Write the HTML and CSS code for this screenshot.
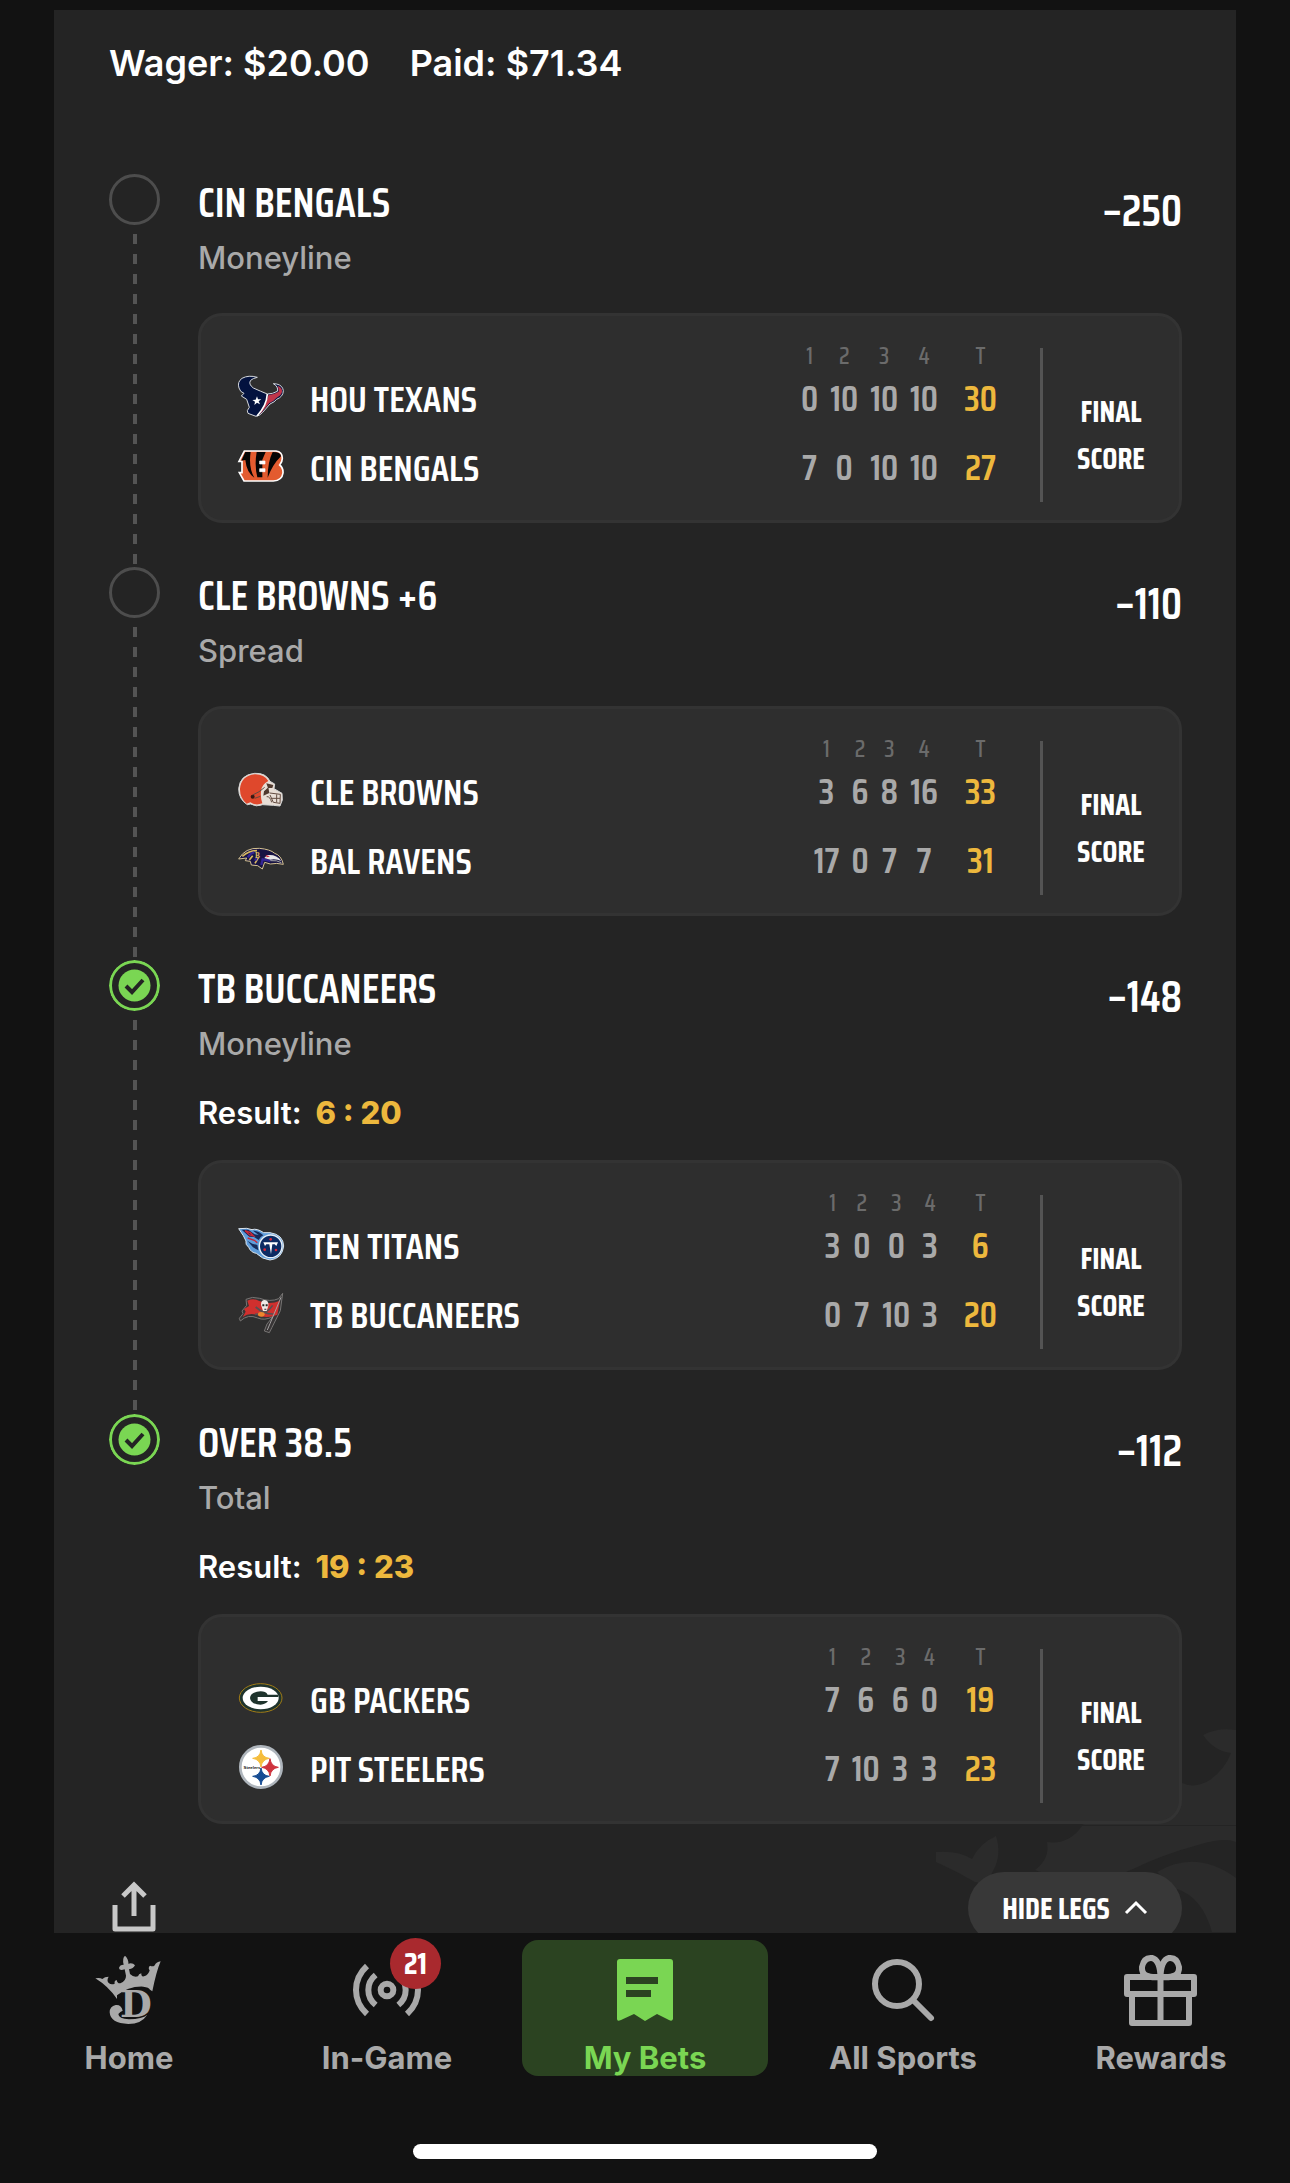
FILE: index.html
```
<!DOCTYPE html>
<html lang="en">
<head>
    <meta charset="UTF-8">
    <meta name="viewport" content="width=device-width, initial-scale=1.0">
    <title>My Bets</title>
    <link rel="stylesheet" href="styles.css">
</head>
<body>

<main class="bet-slip">
    <!-- crown watermark -->
    <svg class="watermark" viewBox="0 0 300 213" aria-hidden="true">
        <path d="M267 16Q282 8 300 11V106H146L246 64Q259 70 274 61Q289 50 295 34Q278 32 267 16Z"/>
        <path d="M146 107H300V123Q288 118 262 126Q228 135 197 150L150 170L99 151Q114 140 111 123Q133 126 146 107Z"/>
        <path d="M0 133Q22 131 36 140Q44 124 60 117Q66 136 57 152L50 165L39 163Q20 152 0 143Z"/>
        <path d="M221 153Q260 130 300 159V213H276Q266 178 241 170Z"/>
    </svg>

    <header class="amounts">
        <span>Wager: $20.00</span>
        <span>Paid: $71.34</span>
    </header>

    <section class="leg">
        <div class="rail">
            <span class="status"></span>
            <span class="dashes"></span>
        </div>
        <div class="leg-body">
            <div class="leg-head">
                <div>
                    <h2 class="pick">CIN BENGALS</h2>
                    <p class="market">Moneyline</p>
                </div>
                <span class="odds">–250</span>
            </div>
            <div class="card">
                <table class="scores">
                    <thead>
                        <tr><td></td><td></td><th>1</th><th>2</th><th>3</th><th>4</th><th class="total">T</th></tr>
                    </thead>
                    <tbody>
                        <tr>
                            <td class="logo">
                                <svg viewBox="51 43 144 144">
                                    <path d="M112 50Q86 42 66 53Q51 64 57 82Q60 94 72 98L64 106L80 116L88 140L82 150L84 158L108 167Q120 165 128 155L150 130Q164 124 170 116Q190 108 190 90Q188 74 170 70L160 69Q176 78 172 92Q158 100 142 100Q122 92 100 82Q84 70 92 59Q98 53 112 50Z" fill="#03123f" stroke="#d6d9de" stroke-width="3"/>
                                    <path d="M146 102Q158 103 176 93Q178 82 172 75Q188 80 186 94Q184 104 169 112Q162 121 148 127L124 156L114 163Q136 138 146 102Z" fill="#c0354a"/>
                                    <path d="M142 100Q140 135 111 166" fill="none" stroke="#fff" stroke-width="5"/>
                                    <path d="M111 107l3 9 10 0-8 6 4 9-9-5-8 7 2-10-8-5 10-1z" fill="#fff"/>
                                </svg>
                            </td>
                            <th class="team">HOU TEXANS</th>
                            <td>0</td><td>10</td><td>10</td><td>10</td><td class="total">30</td>
                        </tr>
                        <tr>
                            <td class="logo">
                                <svg viewBox="51 250 144 144">
                                    <path d="M73 271H168Q187 273 187 293Q187 304 179 313Q190 322 189 337Q186 360 160 361H72L58 336H66V302H57Z" fill="#e35b2f" stroke="#fff" stroke-width="5"/>
                                    <path d="M76 274H92Q85 320 103 351Q80 336 76 298L64 300ZM110 274H137L127 297V350H112Q103 314 110 274ZM158 274Q183 274 183 287Q158 311 143 351Q143 303 158 274Z" fill="#050505"/>
                                    <path d="M119 301h16v9h-16zM119 324h16v9h-16z" fill="#fff" stroke="#fff" stroke-width="2"/>
                                </svg>
                            </td>
                            <th class="team">CIN BENGALS</th>
                            <td>7</td><td>0</td><td>10</td><td>10</td><td class="total">27</td>
                        </tr>
                    </tbody>
                </table>
                <p class="state">FINAL<br>SCORE</p>
            </div>
        </div>
    </section>

    <section class="leg">
        <div class="rail">
            <span class="status"></span>
            <span class="dashes"></span>
        </div>
        <div class="leg-body">
            <div class="leg-head">
                <div>
                    <h2 class="pick">CLE BROWNS +6</h2>
                    <p class="market">Spread</p>
                </div>
                <span class="odds">–110</span>
            </div>
            <div class="card">
                <table class="scores">
                    <thead>
                        <tr><td></td><td></td><th>1</th><th>2</th><th>3</th><th>4</th><th class="total">T</th></tr>
                    </thead>
                    <tbody>
                        <tr>
                            <td class="logo">
                                <svg viewBox="51 22 144 144">
                                    <path d="M82 132Q56 116 56 84Q60 42 104 38Q138 36 150 62L164 70L162 84L186 98L187 118L180 136L160 134L128 132Q108 140 92 130Z" fill="#e8ded6" stroke="#d5d5d5" stroke-width="3"/>
                                    <path d="M80 129Q59 112 60 84Q64 45 104 41Q132 40 145 61Q124 72 123 92Q121 112 127 128Q108 136 91 125Z" fill="#df482c"/>
                                    <path d="M139 68L160 73L157 82L144 82ZM132 92L145 80L148 97L130 105Z" fill="#50392e"/>
                                    <circle cx="98" cy="108" r="6" fill="#3b1711"/>
                                    <path d="M98 103Q118 95 134 80M104 113L121 107M149 97L181 101L180 128L160 125L150 103M154 113H180M170 101V125M140 108Q150 106 155 125" fill="none" stroke="#634c41" stroke-width="3"/>
                                </svg>
                            </td>
                            <th class="team">CLE BROWNS</th>
                            <td>3</td><td>6</td><td>8</td><td>16</td><td class="total">33</td>
                        </tr>
                        <tr>
                            <td class="logo">
                                <svg viewBox="51 229 144 144">
                                    <path d="M56 295Q76 260 118 263Q151 266 164 278Q184 284 190 311Q170 306 151 310L134 305L127 325L113 315L94 313L91 302L76 300L80 292Z" fill="#171343" stroke="#d7c391" stroke-width="3"/>
                                    <path d="M67 287Q86 270 111 270M88 298L98 285M105 308L115 291" fill="none" stroke="#d9b95f" stroke-width="5"/>
                                    <path d="M84 290Q92 276 103 275M105 300L110 292M124 313L128 296Q143 298 151 301" fill="none" stroke="#352596" stroke-width="7"/>
                                    <path d="M141 284Q168 280 184 301Q168 294 151 297L133 292Z" fill="#e9e8e9"/>
                                    <path d="M151 300Q171 298 184 306" fill="none" stroke="#aaa" stroke-width="3"/>
                                    <path d="M137 282l13 6-10 2z" fill="#ce2638"/>
                                    <text x="105" y="292" class="logo-b">B</text>
                                </svg>
                            </td>
                            <th class="team">BAL RAVENS</th>
                            <td>17</td><td>0</td><td>7</td><td>7</td><td class="total">31</td>
                        </tr>
                    </tbody>
                </table>
                <p class="state">FINAL<br>SCORE</p>
            </div>
        </div>
    </section>

    <section class="leg">
        <div class="rail">
            <svg class="status won" viewBox="0 0 51 51" role="img" aria-label="Won">
                <circle cx="25.5" cy="25.5" r="24" fill="none" stroke="#7ad653" stroke-width="3"/>
                <circle cx="25.5" cy="25.5" r="16" fill="#7ad653"/>
                <path d="M17 26l6 6 11-12" fill="none" stroke="#242424" stroke-width="4"/>
            </svg>
            <span class="dashes"></span>
        </div>
        <div class="leg-body">
            <div class="leg-head">
                <div>
                    <h2 class="pick">TB BUCCANEERS</h2>
                    <p class="market">Moneyline</p>
                    <p class="result">Result: <b>6 : 20</b></p>
                </div>
                <span class="odds">–148</span>
            </div>
            <div class="card">
                <table class="scores">
                    <thead>
                        <tr><td></td><td></td><th>1</th><th>2</th><th>3</th><th>4</th><th class="total">T</th></tr>
                    </thead>
                    <tbody>
                        <tr>
                            <td class="logo">
                                <svg viewBox="51 34 144 144">
                                    <path d="M56 54L80 53L96 57Q110 52 131 66L150 66Q190 72 191 106Q187 144 150 148Q127 146 109 128Q93 126 86 110Q75 101 78 91L70 75Z" fill="#5f9ddb" stroke="#dce5ed" stroke-width="3"/>
                                    <path d="M65 57L85 57L104 71L116 73L99 60Q115 60 130 74Q119 79 116 88L102 79L88 78ZM82 90L97 99L112 103L115 119L99 110Z" fill="#152b5b"/>
                                    <path d="M75 60L91 66L101 76L89 73ZM83 82L103 89L112 96" fill="none" stroke="#c92737" stroke-width="4"/>
                                    <circle cx="152" cy="107" r="34" fill="#0d2b63" stroke="#e9f1f7" stroke-width="4"/>
                                    <path d="M130 95H174L169 106L164 101H157L153 131L148 101H139L135 106Z" fill="#fff"/>
                                    <g fill="#dc2738"><circle cx="152" cy="86" r="4"/><circle cx="134" cy="117" r="4"/><circle cx="168" cy="118" r="4"/></g>
                                </svg>
                            </td>
                            <th class="team">TEN TITANS</th>
                            <td>3</td><td>0</td><td>0</td><td>3</td><td class="total">6</td>
                        </tr>
                        <tr>
                            <td class="logo">
                                <svg viewBox="51 241 144 144">
                                    <path d="M78 266Q96 256 119 263Q151 275 176 264L188 248L181 300L156 350L148 366L133 361L141 340L159 318Q133 331 113 322Q84 309 61 331L58 323L69 309L66 301L80 284Z" fill="#383536" stroke="#777574" stroke-width="3"/>
                                    <path d="M82 270Q100 262 116 270Q148 284 180 270L172 312Q147 324 119 316Q91 303 68 319L77 303L72 295L87 286Z" fill="#d0302e"/>
                                    <path d="M107 289Q132 311 161 310M105 311Q140 312 158 284" fill="none" stroke="#575052" stroke-width="5"/>
                                    <path d="M123 282Q123 268 134 268Q147 270 145 285L140 301H129Z" fill="#eeeae7"/>
                                    <path d="M127 281h6v6h-6zM137 281h6v6h-6zM133 294h6v3h-6z" fill="#292524"/>
                                    <ellipse cx="124" cy="311" rx="10" ry="7" fill="#eb872e"/>
                                    <path d="M183 260L150 339L142 358" fill="none" stroke="#a5a3a3" stroke-width="3"/>
                                </svg>
                            </td>
                            <th class="team">TB BUCCANEERS</th>
                            <td>0</td><td>7</td><td>10</td><td>3</td><td class="total">20</td>
                        </tr>
                    </tbody>
                </table>
                <p class="state">FINAL<br>SCORE</p>
            </div>
        </div>
    </section>

    <section class="leg">
        <div class="rail">
            <svg class="status won" viewBox="0 0 51 51" role="img" aria-label="Won">
                <circle cx="25.5" cy="25.5" r="24" fill="none" stroke="#7ad653" stroke-width="3"/>
                <circle cx="25.5" cy="25.5" r="16" fill="#7ad653"/>
                <path d="M17 26l6 6 11-12" fill="none" stroke="#242424" stroke-width="4"/>
            </svg>
        </div>
        <div class="leg-body">
            <div class="leg-head">
                <div>
                    <h2 class="pick">OVER 38.5</h2>
                    <p class="market">Total</p>
                    <p class="result">Result: <b>19 : 23</b></p>
                </div>
                <span class="odds">–112</span>
            </div>
            <div class="card">
                <table class="scores">
                    <thead>
                        <tr><td></td><td></td><th>1</th><th>2</th><th>3</th><th>4</th><th class="total">T</th></tr>
                    </thead>
                    <tbody>
                        <tr>
                            <td class="logo">
                                <svg viewBox="51 46 144 144">
                                    <ellipse cx="122" cy="112" rx="64" ry="43" fill="#1f342d" stroke="#a17b16" stroke-width="3"/>
                                    <ellipse cx="122" cy="112" rx="54" ry="34" fill="#fff"/>
                                    <path d="M174 102H143Q137 92 122 92Q91 94 90 112Q92 131 122 132Q137 131 144 121H113V109H175Z" fill="#1f342d"/>
                                </svg>
                            </td>
                            <th class="team">GB PACKERS</th>
                            <td>7</td><td>6</td><td>6</td><td>0</td><td class="total">19</td>
                        </tr>
                        <tr>
                            <td class="logo">
                                <svg viewBox="51 253 144 144">
                                    <circle cx="123" cy="319" r="62" fill="#fff" stroke="#aeb5bc" stroke-width="8"/>
                                    <path d="M123 268Q126 291 148 293Q126 296 123 319Q120 296 98 293Q120 291 123 268Z" fill="#f5bd3c" stroke="#f5bd3c" stroke-width="3"/>
                                    <path d="M150 294Q153 317 175 320Q153 323 150 346Q147 323 125 320Q147 317 150 294Z" fill="#ce333d" stroke="#ce333d" stroke-width="3"/>
                                    <path d="M123 322Q126 345 148 347Q126 350 123 373Q120 350 98 347Q120 345 123 322Z" fill="#164c93" stroke="#164c93" stroke-width="3"/>
                                    <text x="96" y="324" class="logo-steelers">Steelers</text>
                                </svg>
                            </td>
                            <th class="team">PIT STEELERS</th>
                            <td>7</td><td>10</td><td>3</td><td>3</td><td class="total">23</td>
                        </tr>
                    </tbody>
                </table>
                <p class="state">FINAL<br>SCORE</p>
            </div>
        </div>
    </section>

    <footer class="slip-actions">
        <button type="button" class="share" aria-label="Share">
            <svg viewBox="0 0 50 54">
                <path d="M6 25V49H44V25" fill="none" stroke="#c8c8c8" stroke-width="5" stroke-linejoin="round"/>
                <path d="M25 36V5M14 16L25 5L36 16" fill="none" stroke="#c8c8c8" stroke-width="5"/>
            </svg>
        </button>
        <button type="button" class="hide-legs">
            HIDE LEGS
            <svg viewBox="0 0 24 16"><path d="M2 13L12 3L22 13" fill="none" stroke="#fff" stroke-width="3"/></svg>
        </button>
    </footer>
</main>

<nav class="tab-bar">
    <div class="tabs">
        <a href="#" class="tab">
            <svg class="tab-icon" viewBox="273 336 228 228">
                <path d="M351 477Q325 439 286 415Q300 412 307 417Q314 410 326 410Q319 421 326 429Q334 436 344 431Q342 422 350 420Q352 431 361 430Q378 423 378 407L374 388Q358 393 357 384Q359 374 371 374Q366 355 375 347Q386 357 385 371Q398 367 405 376Q400 386 387 388L390 402Q401 413 414 409Q416 402 424 400Q423 411 432 409Q446 405 449 391Q443 383 450 377Q458 380 463 377Q470 365 482 364Q469 394 457 454L450 449Q447 442 430 440Q386 438 351 466Z"/>
                <text x="360" y="530" class="logo-d">D</text>
                <path d="M368 512Q364 493 347 495Q329 499 329 517Q331 550 385 552Q424 552 442 524Q427 537 387 538Q356 537 355 522Q361 515 368 512Z"/>
            </svg>
            <span>Home</span>
        </a>
        <a href="#" class="tab">
            <span class="icon-wrap">
                <svg class="tab-icon" viewBox="1047 336 228 228">
                    <g fill="none" stroke="#a9a9a9" stroke-width="18">
                        <circle cx="1161" cy="450" r="19"/>
                        <path d="M1101 378Q1068 408 1068 450Q1068 492 1101 522M1127 405Q1105 423 1105 450Q1105 477 1127 495M1195 405Q1217 423 1217 450Q1217 477 1195 495M1221 378Q1254 408 1254 450Q1254 492 1221 522"/>
                    </g>
                </svg>
                <span class="badge">21</span>
            </span>
            <span>In-Game</span>
        </a>
        <a href="#" class="tab active" aria-current="page">
            <svg class="tab-icon" viewBox="0 0 76 76">
                <path d="M13 7H63Q66 7 66 10V67Q65 70 62 68L50 62L38 69L27 62L14 68Q10 70 10 67V10Q10 7 13 7Z"/>
                <path d="M19 25h32v7H19zM19 38h25v7H19z" fill="#2b4321"/>
            </svg>
            <span>My Bets</span>
        </a>
        <a href="#" class="tab">
            <svg class="tab-icon" viewBox="0 0 76 76">
                <g fill="none" stroke="#a9a9a9" stroke-width="6" stroke-linecap="round">
                    <circle cx="32" cy="32" r="22"/>
                    <path d="M48 48L66 66"/>
                </g>
            </svg>
            <span>All Sports</span>
        </a>
        <a href="#" class="tab">
            <svg class="tab-icon" viewBox="0 0 76 76">
                <g fill="none" stroke="#a9a9a9" stroke-width="6" stroke-linejoin="round">
                    <path d="M4 25H71V42H4ZM9 42V71H66V42M37.5 25V71M37.5 25Q18 27 19 15Q21 5 29 6Q37 8 37.5 25Q38 8 46 6Q54 5 56 15Q57 27 37.5 25"/>
                </g>
            </svg>
            <span>Rewards</span>
        </a>
    </div>
    <div class="home-indicator"></div>
</nav>

</body>
</html>
```
FILE: styles.css
```
* {
    box-sizing: border-box;
}

body {
    margin: 0;
    padding-top: 10px;
    background-color: #121212;
    color: #fff;
    font-family: Inter, "Liberation Sans", sans-serif;
    font-size: 31px;
    line-height: 36px;
}

h2, p {
    margin: 0;
}

button {
    border: none;
    padding: 0;
    background: none;
    color: inherit;
    cursor: pointer;
}

svg {
    display: block;
}

.bet-slip {
    position: relative;
    margin: 0 54px;
    padding: 31px 54px 0 55px;
    background-color: #242424;
    overflow: hidden;
}

.watermark {
    position: absolute;
    right: 0;
    bottom: 14px;
    width: 300px;
    fill: #2b2b2b;
}

.amounts {
    display: flex;
    gap: 40px;
    margin-bottom: 89px;
    font-size: 36px;
    font-weight: 600;
    line-height: 44px;
}

/* Legs */
.leg {
    position: relative;
    display: flex;
    gap: 38px;
}

.rail {
    display: flex;
    flex-direction: column;
    align-items: center;
    gap: 9px;
}

.status {
    flex: none;
    width: 51px;
    height: 51px;
    border: 3px solid #4d4d4d;
    border-radius: 50%;
}

.status.won {
    border: none;
}

.dashes {
    flex: 1;
    width: 4px;
    background: repeating-linear-gradient(#545454 0 10px, transparent 10px 20px);
}

.leg-body {
    flex: 1;
    padding: 6px 0 44px;
}

.leg:last-of-type .leg-body {
    padding-bottom: 0;
}

.leg-head {
    display: flex;
    justify-content: space-between;
    margin-bottom: 37px;
}

.pick, .odds, .scores, .state, .hide-legs, .badge {
    font-family: "Saira Condensed", "Roboto Condensed", "Liberation Sans Narrow", Roboto, sans-serif;
}

.pick {
    margin-bottom: 16px;
    font-size: 42px;
    font-weight: 600;
    line-height: 44px;
}

.market {
    color: #a9a9a9;
    font-weight: 500;
}

.result {
    margin: 33px 0 -8px;
    font-weight: 600;
}

.result b {
    margin-left: 6px;
    color: #edb83d;
    font-weight: 800;
}

.odds {
    padding-top: 9px;
    font-size: 44px;
    font-weight: 600;
    line-height: 44px;
}

/* Score card */
.card {
    display: flex;
    padding: 32px 0 18px 36px;
    border: 3px solid #333;
    border-radius: 24px;
    background-color: #2e2e2e;
}

.scores {
    flex: 1;
    margin-right: 43px;
    border-collapse: collapse;
    color: #a9a9a9;
    font-size: 36px;
    text-align: center;
}

.scores td, .scores th {
    padding: 0 6px;
    white-space: nowrap;
}

.scores thead th {
    height: 16px;
    color: #6b6b6b;
    font-size: 24px;
    font-weight: 500;
    line-height: 16px;
}

.scores thead td {
    height: 16px;
    padding: 0;
}

.scores tbody td, .scores tbody th {
    height: 69px;
    font-weight: 600;
}

.scores .logo {
    width: 73px;
    padding: 0 25px 0 0;
}

.logo svg {
    width: 48px;
    height: 48px;
}

.scores .team {
    width: 100%;
    padding: 0;
    color: #fff;
    font-size: 37px;
    text-align: left;
}

.scores .total {
    min-width: 53px;
    padding: 0 0 0 20px;
}

.scores tbody .total {
    color: #edb83d;
}

.logo-b {
    fill: #e1bd67;
    font: bold 22px "Liberation Serif", serif;
}

.logo-steelers {
    fill: #111;
    font: bold 13px "Liberation Sans", sans-serif;
    text-anchor: middle;
}

.state {
    width: 139px;
    padding-top: 40px;
    border-left: 3px solid #545454;
    font-size: 30px;
    font-weight: bold;
    line-height: 47px;
    text-align: center;
}

/* Bottom of the slip, runs on under the tab bar */
.slip-actions {
    position: relative;
    display: flex;
    justify-content: space-between;
    margin-top: 48px;
    padding-bottom: 2px;
}

.share {
    align-self: flex-start;
    padding-top: 8px;
}

.share svg {
    width: 50px;
    height: 54px;
}

.hide-legs {
    display: flex;
    align-items: center;
    justify-content: center;
    gap: 14px;
    width: 214px;
    height: 72px;
    border-radius: 36px;
    background-color: #383838;
    font-size: 30px;
    font-weight: bold;
}

.hide-legs svg {
    width: 24px;
    height: 16px;
}

/* Tab bar */
.tab-bar {
    position: fixed;
    left: 0;
    right: 0;
    bottom: 0;
    padding: 7px 0 24px;
    background-color: #121212;
}

.tabs {
    display: grid;
    grid-template-columns: repeat(5, 1fr);
}

.tab {
    display: flex;
    flex-direction: column;
    align-items: center;
    gap: 12px;
    margin: 0 6px;
    padding-top: 12px;
    border-radius: 16px;
    color: #a9a9a9;
    fill: #a9a9a9;
    font-weight: 700;
    text-decoration: none;
}

.tab.active {
    background-color: #2b4321;
    color: #7ad653;
    fill: #7ad653;
}

.tab-icon {
    width: 76px;
    height: 76px;
}

.logo-d {
    font: bold 110px "DejaVu Serif", serif;
}

.icon-wrap {
    position: relative;
}

.badge {
    position: absolute;
    top: -14px;
    right: -16px;
    width: 51px;
    height: 51px;
    border-radius: 50%;
    background-color: #a9292e;
    color: #fff;
    font-size: 30px;
    line-height: 51px;
    text-align: center;
}

.home-indicator {
    width: 36%;
    height: 15px;
    margin: 68px auto 0;
    border-radius: 8px;
    background-color: #fff;
}
```
